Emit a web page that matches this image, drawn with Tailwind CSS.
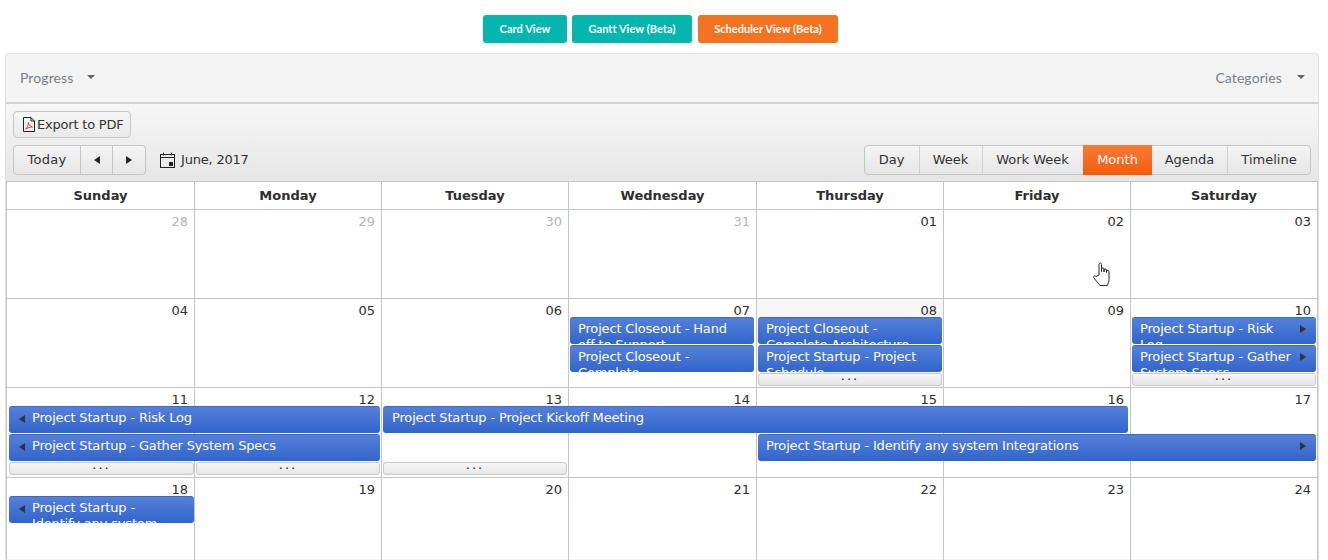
<!DOCTYPE html>
<html>
<head>
<meta charset="utf-8">
<script src="https://cdn.jsdelivr.net/npm/@tailwindcss/browser@4"></script>
<title>Scheduler</title>
</head>
<body class="bg-white h-[560px] overflow-hidden relative font-['DejaVu_Sans',sans-serif] text-[13px] text-[#2e2e2e]">

<div class="h-[53px] pt-[15px] pl-[483px] flex font-['Lato',sans-serif] font-bold text-[11px] text-white">
  <a class="w-[84px] h-[28px] mr-[5px] flex items-center justify-center rounded-[3px] bg-[#04b6ae] tracking-[0.05px]">Card View</a>
  <a class="w-[120px] h-[28px] mr-[6px] flex items-center justify-center rounded-[3px] bg-[#04b6ae] tracking-[0.05px]">Gantt View (Beta)</a>
  <a class="w-[140px] h-[28px] flex items-center justify-center rounded-[3px] bg-[#f47321] tracking-[0.05px]">Scheduler View (Beta)</a>
</div>

<div class="ml-[5px] w-[1314px] h-[507px] border border-b-0 border-[#e0e0e0] rounded-t-[4px] bg-[#f3f3f3]">
  <div class="h-[48px] flex items-center justify-between pl-[14px] pr-[13px] pb-[2px] font-['Lato',sans-serif] text-[14px] tracking-[0.1px] text-[#7a7f85]">
    <div class="flex items-center gap-[14px]"><span>Progress</span><span class="w-0 h-0 border-x-[4px] border-x-transparent border-t-[4px] border-t-[#666]"></span></div>
    <div class="flex items-center gap-[15px]"><span>Categories</span><span class="w-0 h-0 border-x-[4px] border-x-transparent border-t-[4px] border-t-[#666]"></span></div>
  </div>

  <div class="border-t-2 border-[#d2d2d2] h-[79px] bg-linear-to-b from-[#f6f6f6] to-[#e6e6e6] px-[7px] pt-[7px]">
    <div class="w-[118px] h-[27px] flex items-center pl-[8px] gap-[1px] border border-[#c5c5c5] rounded-[4px] bg-linear-to-b from-[#f6f6f6] to-[#e9e9e9]">
      <svg width="14" height="15" viewBox="0 0 14 15" fill="none" stroke="#222" stroke-width="1"><path d="M1.500 .5h7.500l3.500 3.500v10.500h-11z"/><path d="M9 .5v3.500h3.500"/><path d="M3.500 12c2-1 3-4 2.800-6.500c.5 2.500 2 4 4.200 4.500c-2.500 0-5 1-7 2z" stroke="#b33" stroke-width=".8"/></svg>
      <span class="text-[13px] tracking-[-0.2px] text-[#333]">Export to PDF</span>
    </div>
    <div class="mt-[7px] flex items-center justify-between pr-0">
      <div class="flex items-center">
        <div class="w-[133px] h-[30px] flex border border-[#c5c5c5] rounded-[4px] bg-linear-to-b from-[#f4f4f4] to-[#e6e6e6] text-[#333]">
          <div class="w-[67px] flex items-center justify-center border-r border-[#c5c5c5] tracking-[0.3px]">Today</div>
          <div class="w-[32px] flex items-center justify-center border-r border-[#c5c5c5]"><span class="w-0 h-0 border-y-[4px] border-y-transparent border-r-[6px] border-r-[#222]"></span></div>
          <div class="flex-1 flex items-center justify-center"><span class="w-0 h-0 border-y-[4px] border-y-transparent border-l-[6px] border-l-[#222]"></span></div>
        </div>
        <svg class="ml-[14px]" width="15" height="16" viewBox="0 0 15 16" fill="none" stroke="#222"><rect x=".5" y="2.500" width="14" height="13"/><path d="M.5 5.500h14M3.500 .5v3M11.500 .5v3"/><rect x="9" y="10" width="4" height="4" fill="#222" stroke="none"/></svg>
        <span class="ml-[6px] tracking-[-0.2px] text-[#333]">June, 2017</span>
      </div>
      <div class="flex h-[30px] border border-[#c5c5c5] rounded-[4px] bg-linear-to-b from-[#f4f4f4] to-[#e6e6e6] text-[#333]">
        <div class="w-[55px] pr-px flex items-center justify-center border-r border-[#cfcfcf]">Day</div>
        <div class="w-[63px] pr-px flex items-center justify-center border-r border-[#cfcfcf]">Week</div>
        <div class="w-[100px] pr-px flex items-center justify-center">Work Week</div>
        <div class="w-[69px] -my-px flex items-center justify-center bg-linear-to-b from-[#f67a35] to-[#f65c05] text-white">Month</div>
        <div class="w-[76px] flex items-center justify-center border-r border-[#cfcfcf]">Agenda</div>
        <div class="w-[82px] flex items-center justify-center">Timeline</div>
      </div>
    </div>
  </div>

  <div class="w-[1312px] h-[378px] bg-white border-t border-l border-[#c5c5c5]">
    <div class="grid grid-cols-[188px_187px_187px_188px_187px_187px_187px] h-[28px] border-b border-[#c5c5c5] font-bold">
      <div class="border-r border-[#c5c5c5] flex items-center justify-center pt-px">Sunday</div>
      <div class="border-r border-[#c5c5c5] flex items-center justify-center pt-px">Monday</div>
      <div class="border-r border-[#c5c5c5] flex items-center justify-center pt-px">Tuesday</div>
      <div class="border-r border-[#c5c5c5] flex items-center justify-center pt-px">Wednesday</div>
      <div class="border-r border-[#c5c5c5] flex items-center justify-center pt-px">Thursday</div>
      <div class="border-r border-[#c5c5c5] flex items-center justify-center pt-px">Friday</div>
      <div class="border-r border-[#c5c5c5] flex items-center justify-center pt-px">Saturday</div>
    </div>

    <div class="grid grid-cols-[188px_187px_187px_188px_187px_187px_187px] h-[89px] border-b border-[#c5c5c5] text-right">
      <div class="border-r border-[#c5c5c5] pt-[2px] pr-[6px] text-[#b5b5b5]">28</div>
      <div class="border-r border-[#c5c5c5] pt-[2px] pr-[6px] text-[#b5b5b5]">29</div>
      <div class="border-r border-[#c5c5c5] pt-[2px] pr-[6px] text-[#b5b5b5]">30</div>
      <div class="border-r border-[#c5c5c5] pt-[2px] pr-[6px] text-[#b5b5b5]">31</div>
      <div class="border-r border-[#c5c5c5] pt-[2px] pr-[6px]">01</div>
      <div class="border-r border-[#c5c5c5] pt-[2px] pr-[6px]">02</div>
      <div class="border-r border-[#c5c5c5] pt-[2px] pr-[6px]">03</div>
    </div>

    <div class="relative grid grid-cols-[188px_187px_187px_188px_187px_187px_187px] h-[89px] border-b border-[#c5c5c5] text-right">
      <div class="border-r border-[#c5c5c5] pt-[2px] pr-[6px]">04</div>
      <div class="border-r border-[#c5c5c5] pt-[2px] pr-[6px]">05</div>
      <div class="border-r border-[#c5c5c5] pt-[2px] pr-[6px]">06</div>
      <div class="border-r border-[#c5c5c5] pt-[2px] pr-[6px]">07</div>
      <div class="border-r border-[#c5c5c5] pt-[2px] pr-[6px] bg-[#f7f7f7]">08</div>
      <div class="border-r border-[#c5c5c5] pt-[2px] pr-[6px]">09</div>
      <div class="border-r border-[#c5c5c5] pt-[2px] pr-[6px]">10</div>

      <div class="absolute left-[563px] top-[18px] w-[184px] h-[27px] overflow-hidden rounded-[3px] border-t border-[#3c69c6] bg-linear-to-b from-[#5580d9] to-[#3164cc] text-white text-left pl-[8px] pr-[18px] pt-[3px] leading-[16px] tracking-[-0.16px]">Project Closeout - Hand off to Support</div>
      <div class="absolute left-[563px] top-[46px] w-[184px] h-[27px] overflow-hidden rounded-[3px] border-t border-[#3c69c6] bg-linear-to-b from-[#5580d9] to-[#3164cc] text-white text-left pl-[8px] pr-[18px] pt-[3px] leading-[16px] tracking-[-0.16px]">Project Closeout - Complete</div>
      <div class="absolute left-[751px] top-[18px] w-[184px] h-[27px] overflow-hidden rounded-[3px] border-t border-[#3c69c6] bg-linear-to-b from-[#5580d9] to-[#3164cc] text-white text-left pl-[8px] pr-[18px] pt-[3px] leading-[16px] tracking-[-0.16px]">Project Closeout - Complete Architecture</div>
      <div class="absolute left-[751px] top-[46px] w-[184px] h-[27px] overflow-hidden rounded-[3px] border-t border-[#3c69c6] bg-linear-to-b from-[#5580d9] to-[#3164cc] text-white text-left pl-[8px] pr-[18px] pt-[3px] leading-[16px] tracking-[-0.16px]">Project Startup - Project Schedule</div>
      <div class="absolute left-[751px] top-[74px] w-[184px] h-[13px] rounded-[3px] border border-[#c9c9c9] bg-linear-to-b from-[#f6f6f6] to-[#e6e6e6] text-center text-[#222] leading-[4px] tracking-[2px]">...</div>
      <div class="absolute left-[1125px] top-[18px] w-[184px] h-[27px] overflow-hidden rounded-[3px] border-t border-[#3c69c6] bg-linear-to-b from-[#5580d9] to-[#3164cc] text-white text-left pl-[8px] pr-[18px] pt-[3px] leading-[16px] tracking-[-0.16px]">Project Startup - Risk Log<span class="absolute right-[10px] top-[7px] w-0 h-0 border-y-[4px] border-y-transparent border-l-[6px] border-l-[#333]"></span></div>
      <div class="absolute left-[1125px] top-[46px] w-[184px] h-[27px] overflow-hidden rounded-[3px] border-t border-[#3c69c6] bg-linear-to-b from-[#5580d9] to-[#3164cc] text-white text-left pl-[8px] pr-[18px] pt-[3px] leading-[16px] tracking-[-0.16px]">Project Startup - Gather System Specs<span class="absolute right-[10px] top-[7px] w-0 h-0 border-y-[4px] border-y-transparent border-l-[6px] border-l-[#333]"></span></div>
      <div class="absolute left-[1125px] top-[74px] w-[184px] h-[13px] rounded-[3px] border border-[#c9c9c9] bg-linear-to-b from-[#f6f6f6] to-[#e6e6e6] text-center text-[#222] leading-[4px] tracking-[2px]">...</div>
    </div>

    <div class="relative grid grid-cols-[188px_187px_187px_188px_187px_187px_187px] h-[90px] border-b border-[#c5c5c5] text-right">
      <div class="border-r border-[#c5c5c5] pt-[2px] pr-[6px]">11</div>
      <div class="border-r border-[#c5c5c5] pt-[2px] pr-[6px]">12</div>
      <div class="border-r border-[#c5c5c5] pt-[2px] pr-[6px]">13</div>
      <div class="border-r border-[#c5c5c5] pt-[2px] pr-[6px]">14</div>
      <div class="border-r border-[#c5c5c5] pt-[2px] pr-[6px]">15</div>
      <div class="border-r border-[#c5c5c5] pt-[2px] pr-[6px]">16</div>
      <div class="border-r border-[#c5c5c5] pt-[2px] pr-[6px]">17</div>

      <div class="absolute left-[2px] top-[18px] w-[371px] h-[27px] overflow-hidden rounded-[3px] border-t border-[#3c69c6] bg-linear-to-b from-[#5580d9] to-[#3164cc] text-white text-left pl-[23px] pt-[3px] leading-[16px] tracking-[-0.16px]"><span class="absolute left-[10px] top-[8px] w-0 h-0 border-y-[4px] border-y-transparent border-r-[6px] border-r-[#333]"></span>Project Startup - Risk Log</div>
      <div class="absolute left-[2px] top-[46px] w-[371px] h-[27px] overflow-hidden rounded-[3px] border-t border-[#3c69c6] bg-linear-to-b from-[#5580d9] to-[#3164cc] text-white text-left pl-[23px] pt-[3px] leading-[16px] tracking-[-0.16px]"><span class="absolute left-[10px] top-[8px] w-0 h-0 border-y-[4px] border-y-transparent border-r-[6px] border-r-[#333]"></span>Project Startup - Gather System Specs</div>
      <div class="absolute left-[376px] top-[18px] w-[745px] h-[27px] overflow-hidden rounded-[3px] border-t border-[#3c69c6] bg-linear-to-b from-[#5580d9] to-[#3164cc] text-white text-left pl-[9px] pt-[3px] leading-[16px] tracking-[-0.16px]">Project Startup - Project Kickoff Meeting</div>
      <div class="absolute left-[751px] top-[46px] w-[558px] h-[27px] overflow-hidden rounded-[3px] border-t border-[#3c69c6] bg-linear-to-b from-[#5580d9] to-[#3164cc] text-white text-left pl-[8px] pt-[3px] leading-[16px] tracking-[-0.16px]">Project Startup - Identify any system Integrations<span class="absolute right-[10px] top-[7px] w-0 h-0 border-y-[4px] border-y-transparent border-l-[6px] border-l-[#333]"></span></div>
      <div class="absolute left-[2px] top-[74px] w-[185px] h-[13px] rounded-[3px] border border-[#c9c9c9] bg-linear-to-b from-[#f6f6f6] to-[#e6e6e6] text-center text-[#222] leading-[4px] tracking-[2px]">...</div>
      <div class="absolute left-[189px] top-[74px] w-[184px] h-[13px] rounded-[3px] border border-[#c9c9c9] bg-linear-to-b from-[#f6f6f6] to-[#e6e6e6] text-center text-[#222] leading-[4px] tracking-[2px]">...</div>
      <div class="absolute left-[376px] top-[74px] w-[184px] h-[13px] rounded-[3px] border border-[#c9c9c9] bg-linear-to-b from-[#f6f6f6] to-[#e6e6e6] text-center text-[#222] leading-[4px] tracking-[2px]">...</div>
    </div>

    <div class="relative grid grid-cols-[188px_187px_187px_188px_187px_187px_187px] h-[82px] text-right">
      <div class="border-r border-[#c5c5c5] pt-[2px] pr-[6px]">18</div>
      <div class="border-r border-[#c5c5c5] pt-[2px] pr-[6px]">19</div>
      <div class="border-r border-[#c5c5c5] pt-[2px] pr-[6px]">20</div>
      <div class="border-r border-[#c5c5c5] pt-[2px] pr-[6px]">21</div>
      <div class="border-r border-[#c5c5c5] pt-[2px] pr-[6px]">22</div>
      <div class="border-r border-[#c5c5c5] pt-[2px] pr-[6px]">23</div>
      <div class="border-r border-[#c5c5c5] pt-[2px] pr-[6px]">24</div>
      <div class="absolute left-[2px] top-[18px] w-[185px] h-[27px] overflow-hidden rounded-[3px] border-t border-[#3c69c6] bg-linear-to-b from-[#5580d9] to-[#3164cc] text-white text-left pl-[23px] pr-[8px] pt-[3px] leading-[16px] tracking-[-0.16px]"><span class="absolute left-[10px] top-[8px] w-0 h-0 border-y-[4px] border-y-transparent border-r-[6px] border-r-[#333]"></span>Project Startup - Identify any system Integrations</div>
    </div>
  </div>
</div>

<svg class="absolute left-[1093px] top-[262px]" width="20" height="25" viewBox="0 0 20 25" fill="#fff" stroke="#222" stroke-width="1" stroke-linejoin="round"><path d="M6 13V2.500c0-2 2.500-2 2.500 0V9.500V7c0-1.500 2.500-1.500 2.500 0v3V8c0-1.500 2.500-1.500 2.500 0v2.500V9.500c0-1.500 2.500-1.500 2.500 0v8c0 3-1.500 4-1.500 6h-7.500c-1-2-4-4.500-6-7.500c-1-1.500 .5-3 2-1.500z"/></svg>
</body>
</html>
